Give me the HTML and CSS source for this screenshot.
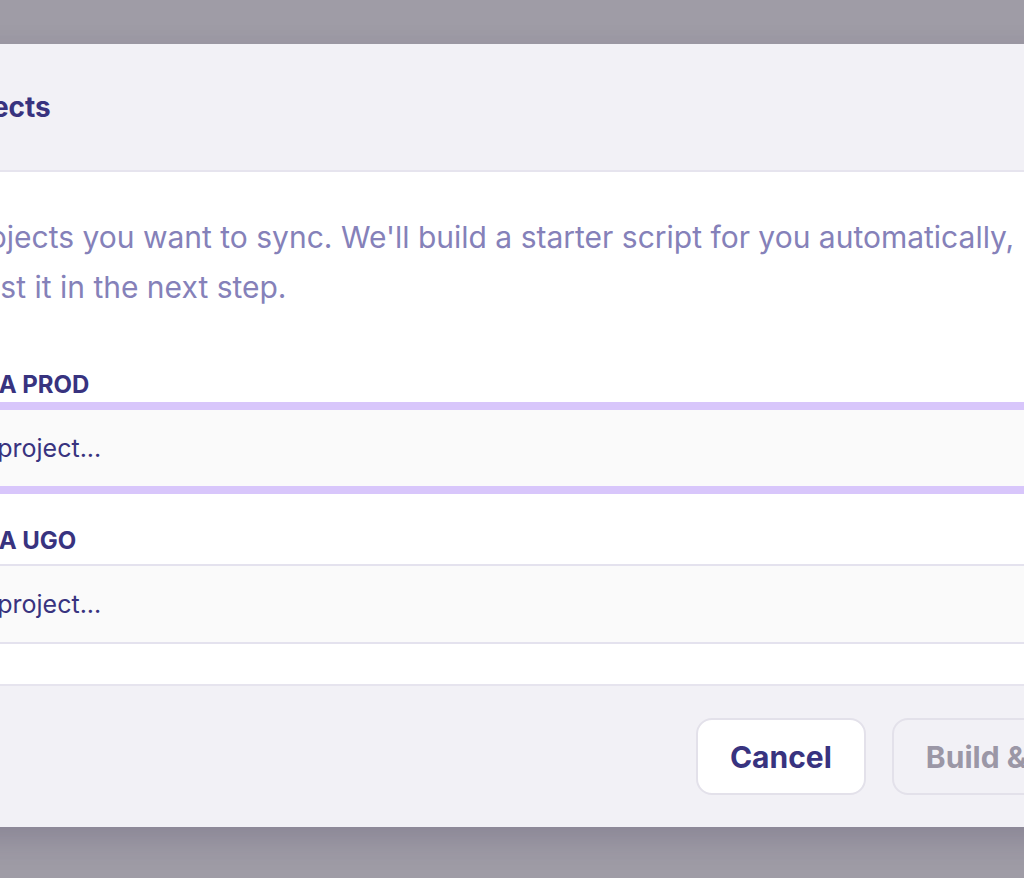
FILE: index.html
```html
<!DOCTYPE html>
<html lang="en">
<head>
  <meta charset="UTF-8">
  <title>Link Sentry projects</title>
  <meta name="viewport" content="width=device-width, initial-scale=1.0">
  <link rel="stylesheet" href="styles.css">
</head>
<body>

  <div class="backdrop">
    <div class="modal">
      <div class="modal-header">
        <h2 class="modal-title">Link Sentry projects</h2>
      </div>

      <div class="modal-body">
        <p class="intro">Pick the two projects you want to sync. We'll build a starter script for you automatically,<br>so you can adjust it in the next step.</p>

        <div class="field">
          <label class="field-label">Project for Vega Prod</label>
          <div class="select is-focused">Choose Sentry project...</div>
        </div>

        <div class="field">
          <label class="field-label">Project for Vega Ugo</label>
          <div class="select">Choose Sentry project...</div>
        </div>
      </div>

      <div class="modal-footer">
        <button type="button" class="btn">Cancel</button>
        <button type="button" class="btn btn-primary" disabled>Build &amp; continue</button>
      </div>
    </div>
  </div>

</body>
</html>
```

FILE: styles.css
```css
* {
  box-sizing: border-box;
}

body {
  margin: 0;
  background-color: #9f9ca6;
  font-family: Inter, "Noto Sans", sans-serif;
  overflow: hidden;
}

.backdrop {
  height: 100vh;
  padding-top: 44px;
  overflow: hidden;
}

/* the dialog is wider than the window, so it starts left of the edge */
.modal {
  width: 1500px;
  margin-left: -263px;
  background-color: #fff;
  box-shadow: 0 12px 30px rgba(40, 30, 70, 0.18);
}

.modal-header {
  height: 128px;
  padding: 0 40px;
  display: flex;
  align-items: center;
  background-color: #f2f1f6;
  border-bottom: 2px solid #e6e4ee;
}

.modal-title {
  margin: 0;
  font-size: 28px;
  font-weight: 700;
  color: #38337f;
}

.modal-body {
  padding: 40px;
}

.intro {
  margin: 0 0 58px;
  font-size: 30px;
  line-height: 50px;
  color: #8581b9;
}

.field + .field {
  margin-top: 38px;
}

.field-label {
  display: block;
  margin-bottom: 8px;
  font-size: 24px;
  line-height: 30px;
  font-weight: 700;
  text-transform: uppercase;
  color: #38337f;
}

.select {
  height: 80px;
  padding: 0 36px;
  display: flex;
  align-items: center;
  font-size: 25px;
  color: #38337f;
  background-color: #fafafa;
  border: 2px solid #e4e2ee;
  border-radius: 12px;
}

.select.is-focused {
  border-color: #d8c6fb;
  box-shadow: 0 0 0 6px #d8c6fb;
}

.modal-footer {
  padding: 32px 40px;
  display: flex;
  justify-content: flex-end;
  gap: 26px;
  background-color: #f2f1f6;
  border-top: 2px solid #e6e4ee;
}

.btn {
  height: 77px;
  padding: 0 32px;
  font-family: inherit;
  font-size: 30px;
  font-weight: 700;
  color: #38337f;
  background-color: #fff;
  border: 2px solid #e3e1ea;
  border-radius: 16px;
  cursor: pointer;
}

.btn-primary {
  color: #9b97a6;
  background-color: transparent;
  cursor: default;
}
```
